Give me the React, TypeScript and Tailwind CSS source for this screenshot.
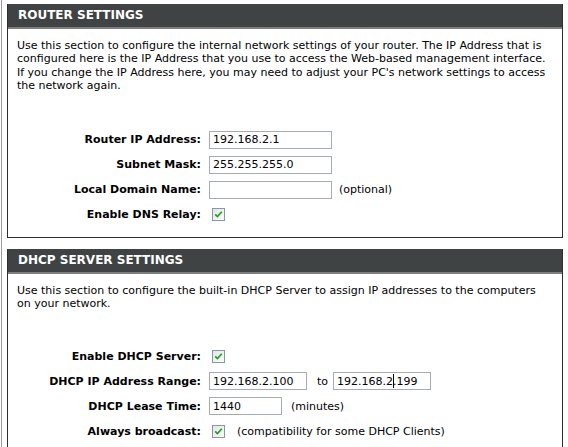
import React from "react";

const Check = () => (
  <span className="ml-[3px] inline-flex h-[13px] w-[13px] items-center justify-center border border-[#8a96a3] bg-gradient-to-br from-[#e2e5e8] to-[#fbfbfb]">
    <svg width="9" height="9" viewBox="0 0 9 9">
      <path d="M1.2 4.4 L3.4 6.6 L7.8 1.8" fill="none" stroke="#21a121" strokeWidth="1.7" />
    </svg>
  </span>
);

const Field = ({ w, children }: { w: string; children?: React.ReactNode }) => (
  <div className={`flex h-[18px] items-center border border-[#a5acb2] bg-white pl-[3px] text-[11px] text-black ${w}`}>
    {children}
  </div>
);

const Row = ({ label, children }: { label: string; children: React.ReactNode }) => (
  <div className="flex h-[25px] items-center">
    <div className="w-[193px] text-right font-bold text-black">{label}</div>
    <div className="ml-[8px] flex items-center">{children}</div>
  </div>
);

const Header = ({ title }: { title: string }) => (
  <div className="flex h-[25px] items-center border-b-2 border-[#7d7f7f] bg-[#404343] pl-[10px] text-[12px] font-bold text-white">
    {title}
  </div>
);

export default function App() {
  return (
    <div className="min-h-screen bg-white font-['DejaVu_Sans',sans-serif] text-[11px] leading-[13px] text-black">
      <div className="ml-[1px] min-h-[447px] border-l border-[#9a9a9a] pl-[5px] pt-[4px]">
        <div className="w-[556px] border border-[#2e2e2e] border-t-0">
          <Header title="ROUTER SETTINGS" />
          <div className="px-[9px] pt-[10px] pb-[10px]">
            <p className="leading-[13.3px]">
              Use this section to configure the internal network settings of your router. The IP Address that is
              configured here is the IP Address that you use to access the Web-based management interface.
              If you change the IP Address here, you may need to adjust your PC's network settings to access
              the network again.
            </p>
          </div>
          <div className="mt-[25px] pb-[10px]">
            <Row label="Router IP Address:">
              <Field w="w-[123px]">192.168.2.1</Field>
            </Row>
            <Row label="Subnet Mask:">
              <Field w="w-[123px]">255.255.255.0</Field>
            </Row>
            <Row label="Local Domain Name:">
              <Field w="w-[123px]" />
              <span className="ml-[7px]">(optional)</span>
            </Row>
            <Row label="Enable DNS Relay:">
              <Check />
            </Row>
          </div>
        </div>

        <div className="mt-[11px] w-[556px] border border-[#2e2e2e] border-t-0 border-b-0">
          <Header title="DHCP SERVER SETTINGS" />
          <div className="px-[9px] pt-[10px]">
            <p className="leading-[13.3px]">
              Use this section to configure the built-in DHCP Server to assign IP addresses to the computers
              <br />
              on your network.
            </p>
          </div>
          <div className="mt-[33px] pb-[10px]">
            <Row label="Enable DHCP Server:">
              <Check />
            </Row>
            <Row label="DHCP IP Address Range:">
              <Field w="w-[98px]">192.168.2.100</Field>
              <span className="ml-[10px] mr-[5px]">to</span>
              <Field w="w-[98px]">
                192.168.2
                <span className="relative">
                  .
                  <span className="absolute left-0 top-[-1px] h-[14px] w-[1px] bg-black" />
                </span>
                199
              </Field>
            </Row>
            <Row label="DHCP Lease Time:">
              <Field w="w-[73px]">1440</Field>
              <span className="ml-[9px]">(minutes)</span>
            </Row>
            <Row label="Always broadcast:">
              <Check />
              <span className="ml-[12px]">(compatibility for some DHCP Clients)</span>
            </Row>
          </div>
        </div>
      </div>
    </div>
  );
}
